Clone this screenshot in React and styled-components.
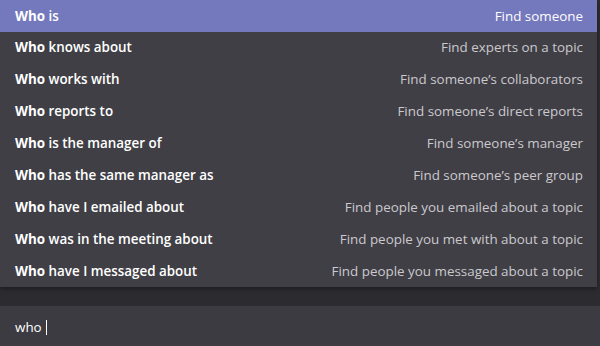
import React from "react";
import styled, { createGlobalStyle } from "styled-components";

const Global = createGlobalStyle`
  html, body { margin: 0; padding: 0; background: #2c2b30; }
  body { font-family: "Open Sans", "Noto Sans", sans-serif; }
`;

const Page = styled.div`
  width: 600px;
  height: 346px;
  display: flex;
  flex-direction: column;
  background: #2c2b30;
  overflow: hidden;
`;

const Menu = styled.ul`
  list-style: none;
  margin: 0;
  padding: 0;
  width: 597px;
  background: #403f45;
  box-shadow: 0 2px 4px rgba(0, 0, 0, 0.35);
  position: relative;
  z-index: 1;
`;

const Row = styled.li`
  height: 32px;
  display: flex;
  align-items: center;
  justify-content: space-between;
  padding: 0 14px 0 15px;
  font-size: 13.4px;
  background: ${(p) => (p.$active ? "#7478bd" : "transparent")};
  margin-bottom: ${(p) => (p.$active ? "-1px" : "0")};
`;

const Phrase = styled.span`
  color: #ffffff;
  font-weight: 600;
  b { font-weight: 700; }
`;

const Hint = styled.span`
  color: ${(p) => (p.$active ? "#ffffff" : "#cbc9cd")};
`;

const Spacer = styled.div`
  height: 19px;
  background: #2c2b30;
`;

const Input = styled.div`
  flex: 1;
  background: #3c3b41;
  display: flex;
  align-items: center;
  padding: 2px 15px 0;
  font-size: 13.4px;
  color: #ffffff;
`;

const Caret = styled.span`
  display: inline-block;
  width: 1px;
  height: 15px;
  background: #ffffff;
  margin-left: 4px;
`;

const items = [
  ["is", "Find someone"],
  ["knows about", "Find experts on a topic"],
  ["works with", "Find someone\u2019s collaborators"],
  ["reports to", "Find someone\u2019s direct reports"],
  ["is the manager of", "Find someone\u2019s manager"],
  ["has the same manager as", "Find someone\u2019s peer group"],
  ["have I emailed about", "Find people you emailed about a topic"],
  ["was in the meeting about", "Find people you met with about a topic"],
  ["have I messaged about", "Find people you messaged about a topic"],
];

export default function App() {
  return (
    <>
      <Global />
      <Page>
        <Menu>
          {items.map(([rest, hint], i) => (
            <Row key={i} $active={i === 0}>
              <Phrase>
                <b>Who</b> {rest}
              </Phrase>
              <Hint $active={i === 0}>{hint}</Hint>
            </Row>
          ))}
        </Menu>
        <Spacer />
        <Input>
          who<Caret />
        </Input>
      </Page>
    </>
  );
}
